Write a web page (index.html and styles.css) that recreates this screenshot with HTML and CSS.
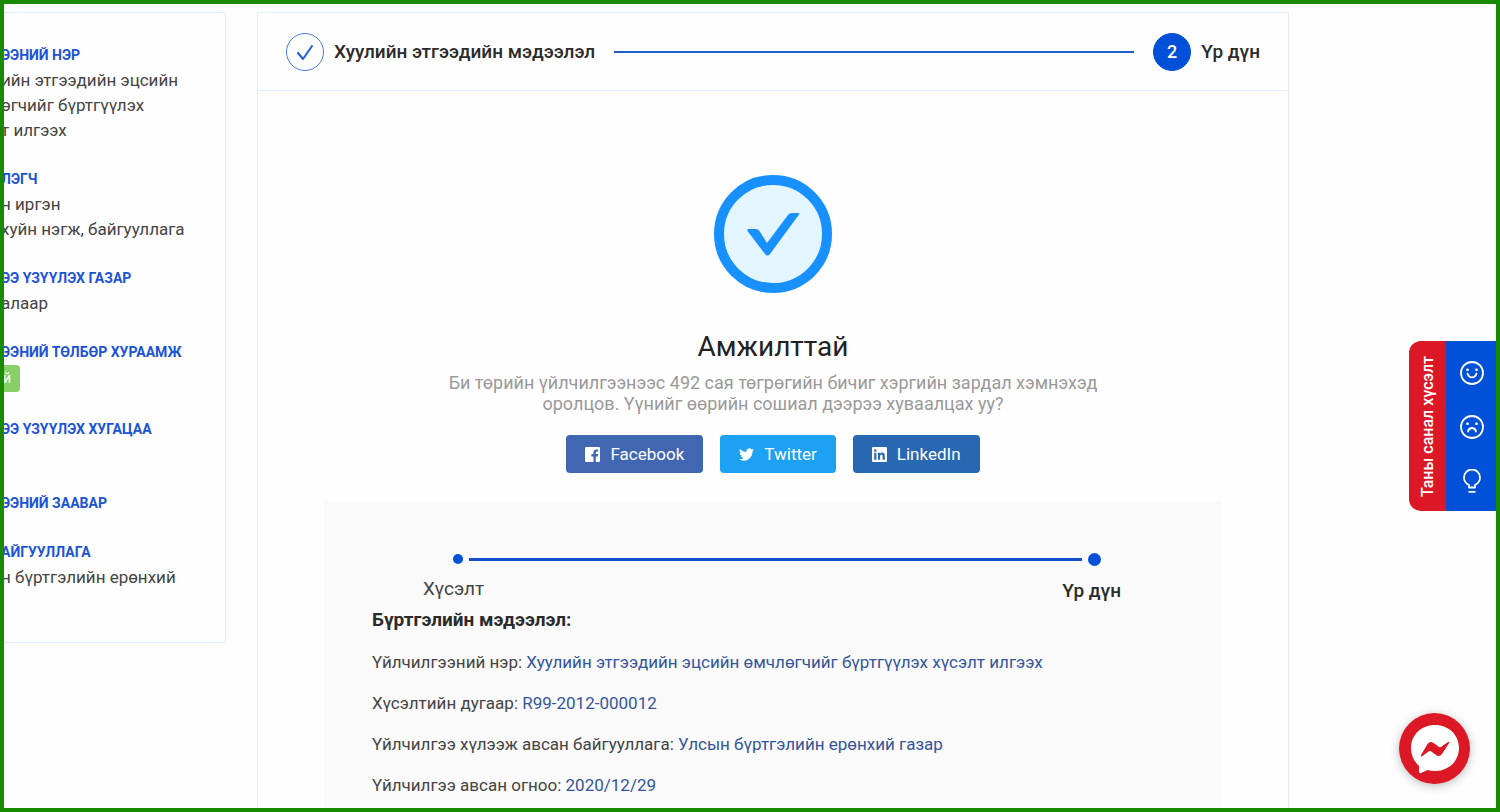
FILE: index.html
```html
<!DOCTYPE html>
<html lang="mn">
<head>
    <meta charset="UTF-8">
    <meta name="viewport" content="width=device-width, initial-scale=1.0">
    <title>Хуулийн этгээдийн мэдээлэл</title>
    <link rel="stylesheet" href="styles.css">
</head>
<body>
    <div class="page">
        <aside class="sidebar">
            <section class="info">
                <h3>ЭЭНИЙ НЭР</h3>
                <p>ийн этгээдийн эцсийн<br>өгчийг бүртгүүлэх<br>т илгээх</p>
            </section>
            <section class="info">
                <h3>ЛЭГЧ</h3>
                <p>н иргэн</p>
                <p>хуйн нэгж, байгууллага</p>
            </section>
            <section class="info">
                <h3>ЭЭ ҮЗҮҮЛЭХ ГАЗАР</h3>
                <p>алаар</p>
            </section>
            <section class="info">
                <h3>ЭЭНИЙ ТӨЛБӨР ХУРААМЖ</h3>
                <span class="badge">й</span>
            </section>
            <section class="info">
                <h3>ЭЭ ҮЗҮҮЛЭХ ХУГАЦАА</h3>
                <p></p>
            </section>
            <section class="info">
                <h3>ЭЭНИЙ ЗААВАР</h3>
            </section>
            <section class="info">
                <h3>АЙГУУЛЛАГА</h3>
                <p>н бүртгэлийн ерөнхий</p>
            </section>
        </aside>

        <main class="panel">
            <div class="steps">
                <span class="step-icon">
                    <svg width="20" height="18" viewBox="0 0 20 18" fill="none" stroke="#1f5fd8" stroke-width="2" stroke-linecap="round" stroke-linejoin="round"><path d="M3 10l5 6L17 3"/></svg>
                </span>
                <span class="step-title">Хуулийн этгээдийн мэдээлэл</span>
                <span class="step-line"></span>
                <span class="step-icon active">2</span>
                <span class="step-title">Үр дүн</span>
            </div>

            <div class="result">
                <svg class="result-icon" width="118" height="118" viewBox="0 0 118 118">
                    <circle cx="59" cy="59" r="54" fill="#e3f6ff" stroke="#1890ff" stroke-width="10"/>
                    <path d="M35 54h7q2 0 3.400 2L53 68 74 40q1.500-2 4-2h6q2 0 1 1.500L56 79q-2.500 3-5 0L33.500 56q-.8-2 1.500-2z" fill="#1890ff"/>
                </svg>
                <h1>Амжилттай</h1>
                <p class="result-text">Би төрийн үйлчилгээнээс 492 сая төгрөгийн бичиг хэргийн зардал хэмнэхэд оролцов. Үүнийг өөрийн сошиал дээрээ хуваалцах уу?</p>
                <div class="share">
                    <button type="button" class="facebook">
                        <svg width="15" height="15" viewBox="0 0 15 15"><path fill="#fff" fill-rule="evenodd" d="M1 0h13q1 0 1 1v13q0 1-1 1h-3.200V9.400h2l.3-2.300h-2.300V5.700q0-1.100 1.200-1.100h1.200V2.500l-1.800-.1q-3 0-3 3v1.700h-2v2.300h2V15H1q-1 0-1-1V1q0-1 1-1z"/></svg>
                        Facebook
                    </button>
                    <button type="button" class="twitter">
                        <svg width="15" height="15" viewBox="0 0 24 24"><path fill="#fff" d="M24 4.600a10 10 0 0 1-2.800.8 5 5 0 0 0 2.100-2.700 10 10 0 0 1-3.100 1.200 4.900 4.900 0 0 0-8.400 4.500A14 14 0 0 1 1.700 3.200a4.900 4.900 0 0 0 1.500 6.500 5 5 0 0 1-2.200-.6 4.900 4.900 0 0 0 3.900 4.900 5 5 0 0 1-2.200.1 4.900 4.900 0 0 0 4.600 3.400A10 10 0 0 1 0 19.500a14 14 0 0 0 21.500-12.400A10 10 0 0 0 24 4.600z"/></svg>
                        Twitter
                    </button>
                    <button type="button" class="linkedin">
                        <svg width="15" height="15" viewBox="0 0 15 15"><path fill="#fff" fill-rule="evenodd" d="M1 0h13q1 0 1 1v13q0 1-1 1H1q-1 0-1-1V1q0-1 1-1zM2.200 5.700v7h2.200v-7zM3.300 2.200a1.200 1.200 0 1 0 .01 2.500 1.200 1.200 0 0 0 0-2.500zM5.900 5.700v7h2.200V9q0-1.500 1.300-1.500T10.600 9v3.700h2.200V8.600q0-3-2.600-3-1.400 0-2.100 1v-.9z"/></svg>
                        LinkedIn
                    </button>
                </div>
            </div>

            <div class="details">
                <div class="track">
                    <span class="dot"></span>
                    <span class="track-line"></span>
                    <span class="dot current"></span>
                </div>
                <div class="track-labels">
                    <span>Хүсэлт</span>
                    <span class="current">Үр дүн</span>
                </div>
                <h2>Бүртгэлийн мэдээлэл:</h2>
                <p>Үйлчилгээний нэр: <span class="value">Хуулийн этгээдийн эцсийн өмчлөгчийг бүртгүүлэх хүсэлт илгээх</span></p>
                <p>Хүсэлтийн дугаар: <span class="value">R99-2012-000012</span></p>
                <p>Үйлчилгээ хүлээж авсан байгууллага: <span class="value">Улсын бүртгэлийн ерөнхий газар</span></p>
                <p>Үйлчилгээ авсан огноо: <span class="value">2020/12/29</span></p>
            </div>
        </main>

        <div class="feedback">
            <div class="feedback-title">Таны санал хүсэлт</div>
            <div class="feedback-icons">
                <button type="button" aria-label="Сэтгэл ханамжтай">
                    <svg width="24" height="24" viewBox="0 0 24 24" fill="none" stroke="#fff" stroke-width="1.800" stroke-linecap="round"><circle cx="12" cy="12" r="11"/><path d="M7.500 12.500q1 3.800 4.500 3.800t4.500-3.800"/><path d="M7.300 8.800h.4M16.300 8.800h.4" stroke-width="2.400"/></svg>
                </button>
                <button type="button" aria-label="Сэтгэл ханамжгүй">
                    <svg width="24" height="24" viewBox="0 0 24 24" fill="none" stroke="#fff" stroke-width="1.800" stroke-linecap="round"><circle cx="12" cy="12" r="11"/><path d="M8 16.500q.8-3.500 4-3.500t4 3.500"/><path d="M7.300 8.800h.4M16.300 8.800h.4" stroke-width="2.400"/></svg>
                </button>
                <button type="button" aria-label="Санал">
                    <svg width="24" height="24" viewBox="0 0 24 24" fill="none" stroke="#fff" stroke-width="1.800"><path d="M9 18.500v-2.500Q4 13.500 4 8.500a8 8 0 0 1 16 0q0 5-5 7.500v2.500z" stroke-linejoin="round"/><path d="M8.500 22.800h7"/></svg>
                </button>
            </div>
        </div>

        <button type="button" class="messenger" aria-label="Messenger">
            <svg width="71" height="71" viewBox="0 0 71 71">
                <path fill="#fff" d="M36 12c13.500 0 24 9.700 24 23S49.500 58 36 58q-4 0-7.500-1L22 60q-2 .6-2-1.500V53C15 48.500 12 42.500 12 35c0-13.300 10.500-23 24-23z"/>
                <path fill="#dc1826" d="M22 42l6.500-11q2.500-3.500 6-1l5.500 4q1 .5 2 0l7-5q2-1 1 1L43 41q-2.500 3.500-6 1l-5-3.700q-1-.6-2 0l-7 5q-1.800.8-1-1.300z"/>
            </svg>
        </button>
    </div>
</body>
</html>
```

FILE: styles.css
```css
* {
    box-sizing: border-box;
}
body {
    margin: 0;
    font-family: Roboto, "Liberation Sans", sans-serif;
    font-size: 17px;
    color: #444;
    background-color: #fdfdfd;
}
h1, h2, h3, p {
    margin: 0;
}
button {
    font-family: inherit;
    border: none;
    cursor: pointer;
}
.page {
    position: relative;
    display: flex;
    align-items: flex-start;
    gap: 31px;
    height: 100vh;
    padding: 8px 207px 0 0;
    border: 4px solid #188a00;
    overflow: hidden;
}

/* left column */
.sidebar {
    flex: none;
    width: 225px;
    margin-left: -3px;
    padding: 30px 0 28px;
    border: 1px solid #e3eefc;
    border-left: none;
    border-radius: 0 3px 3px 0;
    background-color: #fefefe;
    line-height: 25px;
    white-space: nowrap;
}
.info {
    margin-bottom: 24px;
}
.info h3 {
    font-size: 14px;
    font-weight: 700;
    color: #1b53d6;
}
.info p {
    min-height: 25px;
}
.badge {
    display: block;
    width: fit-content;
    margin-bottom: 25px;
    padding: 0 9px 0 2px;
    border-radius: 0 4px 4px 0;
    background-color: #87d068;
    color: #fff;
    font-size: 14px;
    line-height: 27px;
}

/* main panel */
.panel {
    flex: 1;
    border: 1px solid #e3eefc;
    background-color: #fefefe;
}
.steps {
    display: flex;
    align-items: center;
    gap: 10px;
    height: 78px;
    padding: 0 28px;
    border-bottom: 1px solid #e3eefc;
}
.step-icon {
    display: flex;
    align-items: center;
    justify-content: center;
    width: 38px;
    height: 38px;
    border: 1px solid #4a7ee0;
    border-radius: 50%;
}
.step-icon.active {
    border-color: #0050d8;
    background-color: #0050d8;
    color: #fff;
    font-size: 18px;
    font-weight: 500;
}
.step-title {
    font-size: 19px;
    font-weight: 500;
    color: #2b2b2b;
}
.step-line {
    flex: 1;
    height: 2px;
    margin: 0 9px;
    background-color: #1f5fc9;
}
.result {
    display: flex;
    flex-direction: column;
    align-items: center;
    padding: 84px 120px 28px;
    text-align: center;
}
.result h1 {
    margin-top: 34px;
    font-size: 28px;
    font-weight: 400;
    line-height: 40px;
    color: #222;
}
.result-text {
    max-width: 680px;
    margin-top: 5px;
    font-size: 18px;
    line-height: 21px;
    color: #999;
}
.share {
    display: flex;
    gap: 17px;
    margin-top: 21px;
}
.share button {
    display: flex;
    align-items: center;
    gap: 10px;
    height: 38px;
    padding: 0 19px;
    border-radius: 4px;
    color: #fff;
    font-size: 17px;
}
.share .facebook {
    background-color: #4267b2;
}
.share .twitter {
    background-color: #1da1f2;
}
.share .linkedin {
    background-color: #2867b2;
}

/* request details */
.details {
    margin: 0 66px;
    padding: 51px 48px 28px;
    background-color: #fafafa;
}
.details p {
    margin-top: 17px;
    line-height: 24px;
}
.details h2 {
    margin-top: 1px;
    font-size: 19px;
    font-weight: 700;
    line-height: 26px;
    color: #2b2b2b;
}
.value {
    color: #34559b;
}
.track {
    display: flex;
    align-items: center;
    gap: 6px;
    height: 14px;
    padding: 0 73px 0 81px;
}
.dot {
    width: 10px;
    height: 10px;
    border-radius: 50%;
    background-color: #0050d8;
}
.dot.current {
    width: 13px;
    height: 13px;
}
.track-line {
    flex: 1;
    height: 3px;
    background-color: #1150cf;
}
.track-labels {
    display: flex;
    justify-content: space-between;
    padding: 8px 53px 0 51px;
    font-size: 19px;
    line-height: 30px;
}
.track-labels .current {
    padding-top: 2px;
    font-weight: 500;
    color: #2b2b2b;
}

/* floating widgets */
.feedback {
    position: absolute;
    top: 337px;
    right: 0;
    display: flex;
    height: 170px;
    border-radius: 12px 0 0 12px;
    overflow: hidden;
}
.feedback-title {
    width: 37px;
    background-color: #dc1826;
    color: #fff;
    font-size: 16px;
    font-weight: 500;
    line-height: 37px;
    text-align: center;
    writing-mode: vertical-rl;
    transform: rotate(180deg);
}
.feedback-icons {
    display: flex;
    flex-direction: column;
    align-items: center;
    justify-content: space-between;
    width: 50px;
    padding: 20px 0 18px 2px;
    background-color: #0050d8;
}
.feedback-icons button {
    display: flex;
    padding: 0;
    background: none;
}
.messenger {
    position: absolute;
    right: 26px;
    bottom: 24px;
    display: flex;
    padding: 0;
    border-radius: 50%;
    background-color: #dc1826;
    box-shadow: 0 2px 10px rgba(0, 0, 0, 0.25);
}
```
